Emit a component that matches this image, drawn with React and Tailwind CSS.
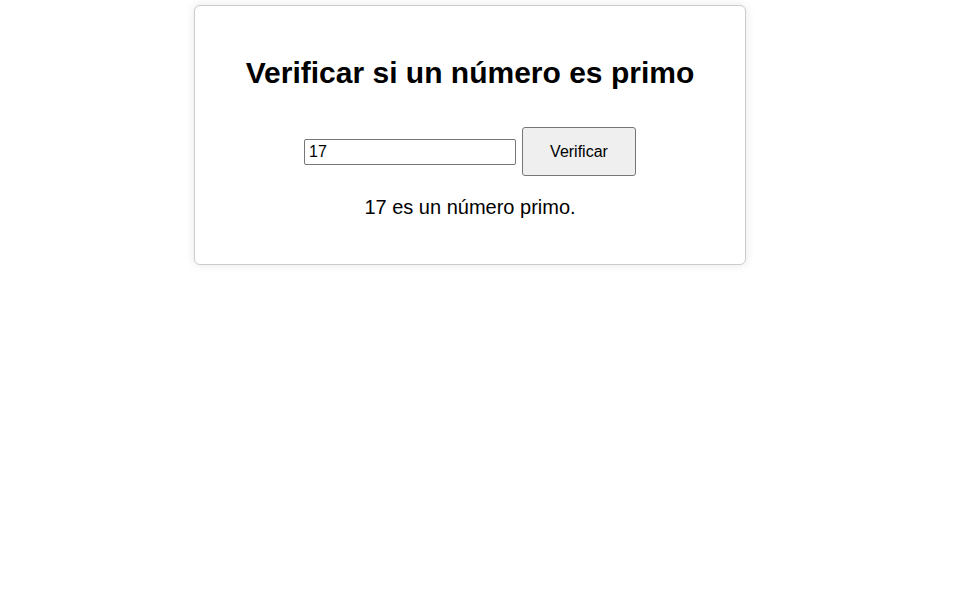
import React, { useState } from "react";

function isPrime(n) {
  if (!Number.isInteger(n) || n < 2) return false;
  for (let i = 2; i * i <= n; i++) if (n % i === 0) return false;
  return true;
}

export default function App() {
  const [value, setValue] = useState("17");
  const [result, setResult] = useState("17 es un número primo.");

  const check = () => {
    const n = Number(value);
    setResult(isPrime(n) ? `${n} es un número primo.` : `${n} no es un número primo.`);
  };

  return (
    <div className="min-h-screen bg-white pt-[5px] font-['Liberation_Sans',Arial,sans-serif] text-black">
      {/* Card */}
      <div className="ml-[194px] w-[552px] rounded-[6px] border border-[#cccccc] bg-white p-[25px] text-center shadow-[0_0_10px_rgba(0,0,0,0.1)]">
        <h1 className="mt-[25px] mb-[37px] text-[30px] leading-[34px] font-bold">
          Verificar si un número es primo
        </h1>

        <div className="flex items-center justify-center gap-[6px]">
          <input
            type="text"
            value={value}
            onChange={(e) => setValue(e.target.value)}
            className="h-[26px] w-[212px] rounded-[2px] border border-[#767676] bg-white px-[4px] text-[16px] text-black outline-none"
          />
          <button
            onClick={check}
            className="h-[49px] w-[114px] rounded-[3px] border border-[#767676] bg-[#efefef] text-[16px] text-black cursor-pointer"
          >
            Verificar
          </button>
        </div>

        <p className="mt-[20px] mb-[20px] text-[20px] leading-[23px]">{result}</p>
      </div>
    </div>
  );
}
